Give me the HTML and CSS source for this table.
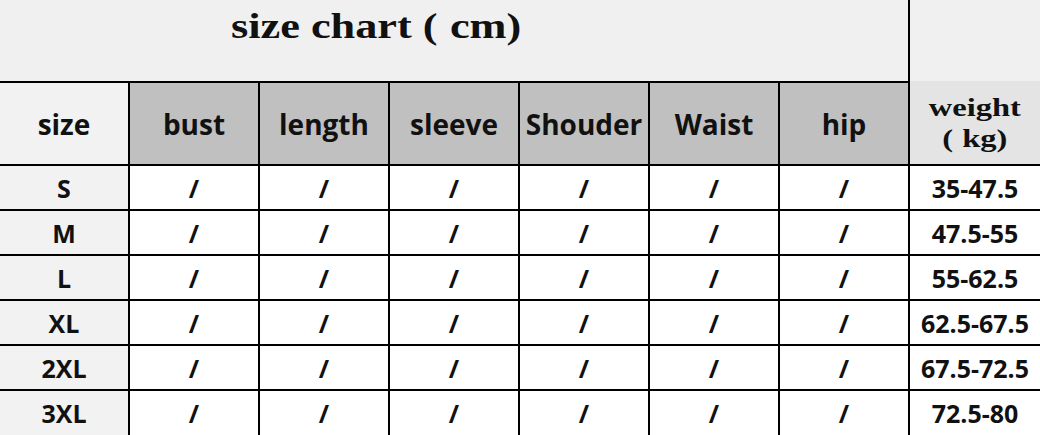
FILE: index.html
```html
<!DOCTYPE html>
<html>
<head>
<meta charset="utf-8">
<link rel="stylesheet" href="styles.css">
</head>
<body>
<div class="chart">
  <div class="title"><span class="serif title-text">size chart (<span class="gap">cm</span>)</span></div>
  <div class="corner"></div>

  <div class="cell head first light">size</div>
  <div class="cell head gray">bust</div>
  <div class="cell head gray">length</div>
  <div class="cell head gray">sleeve</div>
  <div class="cell head gray">Shouder</div>
  <div class="cell head gray">Waist</div>
  <div class="cell head gray">hip</div>
  <div class="cell head weight"><span class="serif weight-text">weight<br>(<span class="gap">kg</span>)</span></div>

  <div class="cell first light">S</div>
  <div class="cell">/</div><div class="cell">/</div><div class="cell">/</div><div class="cell">/</div><div class="cell">/</div><div class="cell">/</div>
  <div class="cell">35-47.5</div>

  <div class="cell first light">M</div>
  <div class="cell">/</div><div class="cell">/</div><div class="cell">/</div><div class="cell">/</div><div class="cell">/</div><div class="cell">/</div>
  <div class="cell">47.5-55</div>

  <div class="cell first light">L</div>
  <div class="cell">/</div><div class="cell">/</div><div class="cell">/</div><div class="cell">/</div><div class="cell">/</div><div class="cell">/</div>
  <div class="cell">55-62.5</div>

  <div class="cell first light">XL</div>
  <div class="cell">/</div><div class="cell">/</div><div class="cell">/</div><div class="cell">/</div><div class="cell">/</div><div class="cell">/</div>
  <div class="cell">62.5-67.5</div>

  <div class="cell first light">2XL</div>
  <div class="cell">/</div><div class="cell">/</div><div class="cell">/</div><div class="cell">/</div><div class="cell">/</div><div class="cell">/</div>
  <div class="cell">67.5-72.5</div>

  <div class="cell first light">3XL</div>
  <div class="cell">/</div><div class="cell">/</div><div class="cell">/</div><div class="cell">/</div><div class="cell">/</div><div class="cell">/</div>
  <div class="cell">72.5-80</div>
</div>
</body>
</html>
```
FILE: styles.css
```css
html, body {
  margin: 0;
  padding: 0;
  background: #f0f0f0;
}

.chart {
  display: grid;
  grid-template-columns: 128px repeat(6, 130px) 132px;
  grid-template-rows: 81px 83px repeat(5, 45px) 46px;
  width: 1040px;
  height: 435px;
  overflow: hidden;
  font-family: "Open Sans", "Noto Sans", sans-serif;
  font-weight: 700;
  color: #111;
}

.title {
  grid-column: 1 / 8;
  background: #f0f0f0;
  padding: 8px 0 0 231px;
}

.serif {
  display: inline-block;
  font-family: "Liberation Serif", "Times New Roman", serif;
  font-weight: 700;
  color: #111;
}

.title-text {
  font-size: 36px;
  line-height: 36px;
  transform: scaleX(1.23);
  transform-origin: left center;
  white-space: nowrap;
}

.gap {
  margin-left: 0.28em;
}

.corner {
  background: #f0f0f0;
  border-left: 2px solid #000;
}

.cell {
  box-sizing: border-box;
  display: flex;
  align-items: center;
  justify-content: center;
  border-top: 2px solid #000;
  border-left: 2px solid #000;
  background: #fff;
  font-size: 25px;
  white-space: nowrap;
}

.cell.first {
  border-left: none;
}

.cell.light {
  background: #f2f2f2;
}

.head {
  font-size: 28px;
}

.head.gray {
  background: #c0c0c0;
}

.head.weight {
  background: #e4e4e4;
  border-top: none;
}

.weight-text {
  font-size: 26px;
  line-height: 31px;
  text-align: center;
  transform: scaleX(1.25);
  transform-origin: center center;
}
```
